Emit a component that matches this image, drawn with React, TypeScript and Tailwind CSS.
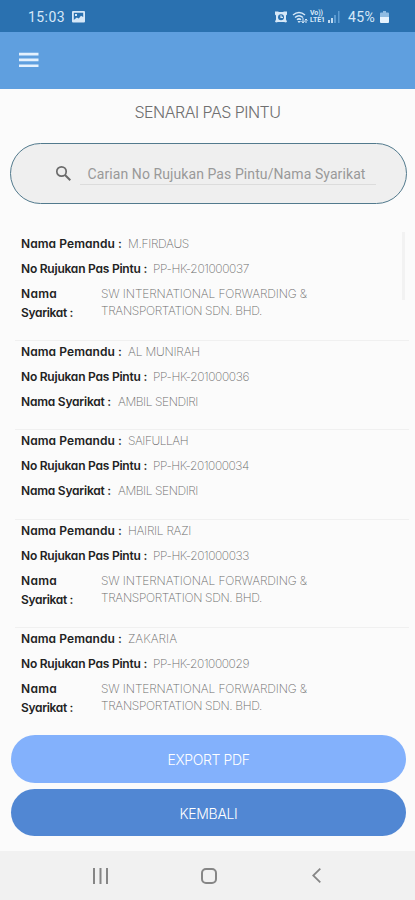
import { useLayoutEffect, useRef, useState } from 'react';

type FitProps = { text: string; width: number; className?: string };

/* Single line of text tracked so that it fills the given width. */
function Fit({ text, width, className = '' }: FitProps) {
  const ref = useRef<HTMLSpanElement>(null);
  const [spacing, setSpacing] = useState(0);
  useLayoutEffect(() => {
    if (!ref.current) return;
    const natural = ref.current.getBoundingClientRect().width - spacing * text.length;
    setSpacing((width - natural) / text.length);
  }, [text, width]);
  return (
    <span ref={ref} className={`inline-block whitespace-pre ${className}`} style={{ letterSpacing: `${spacing}px` }}>
      {text}
    </span>
  );
}

const label = 'font-semibold text-[#222]';
const value = 'font-extralight text-[#6c6c6c]';

type Entry = { driver: string; driverWidth: number; ref: string; company: 'long' | 'short' };

const entries: Entry[] = [
  { driver: 'M.FIRDAUS', driverWidth: 61, ref: 'PP-HK-201000037', company: 'long' },
  { driver: 'AL MUNIRAH', driverWidth: 72, ref: 'PP-HK-201000036', company: 'short' },
  { driver: 'SAIFULLAH', driverWidth: 60, ref: 'PP-HK-201000034', company: 'short' },
  { driver: 'HAIRIL RAZI', driverWidth: 63, ref: 'PP-HK-201000033', company: 'long' },
  { driver: 'ZAKARIA', driverWidth: 49, ref: 'PP-HK-201000029', company: 'long' },
];

function Record({ entry, first }: { entry: Entry; first: boolean }) {
  const long = entry.company === 'long';
  return (
    <li
      className={`ml-[15px] mr-[6px] border-t pl-[6px] text-[12px] leading-[21px] ${first ? 'border-transparent' : 'border-[#f0f0f0]'} ${long ? 'h-[108px]' : 'h-[89.500px]'}`}
    >
      <div className="flex h-[25px]">
        <Fit text="Nama Pemandu :" width={101} className={label} />
        <Fit text={entry.driver} width={entry.driverWidth} className={`ml-[6px] ${value}`} />
      </div>
      <div className="flex h-[25px]">
        <Fit text="No Rujukan Pas Pintu :" width={126} className={label} />
        <Fit text={entry.ref} width={96} className={`ml-[6px] ${value}`} />
      </div>
      {long ? (
        <div className="flex">
          <div className="flex w-[80px] flex-col items-start pt-px leading-[19px]">
            <Fit text="Nama" width={36} className={label} />
            <Fit text="Syarikat :" width={52} className={label} />
          </div>
          <div className="flex flex-col items-start pt-[2px] leading-[17px]">
            <Fit text="SW INTERNATIONAL FORWARDING &" width={206} className={value} />
            <Fit text="TRANSPORTATION SDN. BHD." width={161} className={value} />
          </div>
        </div>
      ) : (
        <div className="flex">
          <Fit text="Nama Syarikat :" width={90} className={label} />
          <Fit text="AMBIL SENDIRI" width={80} className={`ml-[7px] ${value}`} />
        </div>
      )}
    </li>
  );
}

function StatusBar() {
  return (
    <div className="flex h-8 shrink-0 items-center bg-[#2a71b0] pl-[28px] pr-[26px] pt-[2px] font-['Roboto',sans-serif] text-[14px] text-[#d6e8f8]">
      <Fit text="15:03" width={37} />
      <svg className="ml-[7px]" width="13" height="12" viewBox="0 0 13 12">
        <path fill="#d6e8f8" fillRule="evenodd" d="M1 0h11q1 0 1 1v9.500q0 1-1 1H1q-1 0-1-1V1Q0 0 1 0ZM1.800 1.800V9l3-2.500 2 1 2.200-2.700 2.200 1.200V1.800Z" />
        <path fill="#d6e8f8" d="M3 3h2v2H3z" />
      </svg>
      <svg className="ml-auto" width="12" height="12" viewBox="0 0 12 12">
        <path d="M0 .5h3l1 .5h4l1-.5h3v3l-1 1v4l1 2-1 1-2-.5H3l-2 .5-1-1 1-2V4.500L0 3.500Z" fill="#d6e8f8" />
        <circle cx="6" cy="6.200" r="3" fill="#2a71b0" />
        <path d="M6 4.200v2.200h2" stroke="#d6e8f8" strokeWidth="1.200" fill="none" />
      </svg>
      <svg className="ml-[5px]" width="16" height="13" viewBox="0 0 16 13" fill="none" stroke="#d6e8f8">
        <path d="M1 4Q7-1 13 4M3 6.500Q7 3 11 6.500M5 8.800Q7 7 9 8.800" strokeWidth="1.500" />
        <path d="m6 10 1 1.500L8.500 10" fill="#d6e8f8" />
        <path d="M11 7v4.500M9.500 10l1.500 2 1.500-2M14 12V8M12.800 9.500 14 8l1.500 1.500" strokeWidth="1" />
      </svg>
      <div className="ml-[2px] flex w-[15px] flex-col items-start text-[7px] font-bold leading-[7px]">
        <Fit text="Vo))" width={13} className="h-[7px]" />
        <Fit text="LTE1" width={15} className="h-[7px]" />
      </div>
      <svg className="ml-[3px]" width="12" height="12" viewBox="0 0 12 12">
        <path d="M0 9h2v3H0zM3 7h2v5H3z" fill="#c0daf1" />
        <path d="M6 4h2v8H6zM10 0h1.500v12H10z" fill="#5c9bd2" />
      </svg>
      <Fit text="45%" width={27} className="ml-[8px]" />
      <svg className="ml-[5px]" width="9" height="12" viewBox="0 0 9 12">
        <path d="M3 0h3v1.500h2q1 0 1 1V7H0V2.500q0-1 1-1h2Z" fill="#8fbbe2" />
        <path d="M0 6h9v5q0 1-1 1H1q-1 0-1-1Z" fill="#e6f2fd" />
      </svg>
    </div>
  );
}

export default function App() {
  return (
    <div className="flex h-[900px] w-[415px] flex-col overflow-hidden bg-[#fbfbfb] font-['Inter',sans-serif] [font-feature-settings:'cv11']">
      <StatusBar />
      <header className="flex h-[56.500px] shrink-0 items-center bg-[#5f9fdf] pl-[19px]">
        <svg width="20" height="16" viewBox="0 0 20 16" fill="#e4f1fe">
          <path d="M0 .8h19.500v2.700H0zM0 6.600h19.500v2.700H0zM0 12.400h19.500v2.700H0z" />
        </svg>
      </header>
      <h1 className="mt-[11.500px] flex h-[24px] shrink-0 items-center justify-center text-[16px] font-light text-[#707070]">
        <Fit text="SENARAI PAS PINTU" width={146} />
      </h1>
      <div className="ml-[10px] mr-[8px] mt-[18.500px] flex h-[61.500px] shrink-0 items-center rounded-full border-[1.500px] border-[#527a8d] bg-[#efefef] pl-[44px]">
        <svg className="mt-px" width="17" height="17" viewBox="0 0 17 17" fill="none" stroke="#6b6b6b">
          <circle cx="6.500" cy="6.500" r="4.700" strokeWidth="1.700" />
          <path d="m10 10 5.300 5.300" strokeWidth="2" />
        </svg>
        <div className="ml-[8px] mt-[2px] h-[22px] w-[296px] border-b border-[#dcdcdc] pl-[7.500px] font-['Roboto',sans-serif] text-[14px] leading-[23px] text-[#999]">
          <Fit text="Carian No Rujukan Pas Pintu/Nama Syarikat" width={278} />
        </div>
      </div>
      <div className="mt-[27.500px] flex h-[503.500px] shrink-0">
        <ul className="w-[415px] shrink-0">
          {entries.map((entry, i) => (
            <Record key={entry.ref} entry={entry} first={i === 0} />
          ))}
        </ul>
        <div className="-ml-[13px] h-[68px] w-[3px] shrink-0 bg-[#f2f2f2]" />
      </div>
      <div className="ml-[11px] mr-[9px] flex shrink-0 flex-col gap-[6px] text-[14px] font-light text-white">
        <button className="h-[47.500px] rounded-full bg-[#83b1fc] pt-[2px]">
          <Fit text="EXPORT PDF" width={82} />
        </button>
        <button className="h-[47.500px] rounded-full bg-[#5187d3] pt-[2px]">
          <Fit text="KEMBALI" width={58} />
        </button>
      </div>
      <nav className="mt-auto flex h-[49px] shrink-0 items-center bg-[#f1f1f1] pl-[93px] text-[#868686]">
        <svg width="15" height="16" viewBox="0 0 15 16" fill="currentColor">
          <path d="M0 0h2v16H0zM6.500 0h2v16h-2zM13 0h2v16h-2z" />
        </svg>
        <svg className="ml-[93px]" width="16" height="16" viewBox="0 0 16 16" fill="none" stroke="currentColor" strokeWidth="2">
          <rect x="1" y="1" width="14" height="14" rx="4" />
        </svg>
        <svg className="ml-[95px]" width="9" height="15" viewBox="0 0 9 15" fill="none" stroke="currentColor" strokeWidth="1.800">
          <path d="M8.300.7 1.200 7.500l7.100 6.800" />
        </svg>
      </nav>
    </div>
  );
}
